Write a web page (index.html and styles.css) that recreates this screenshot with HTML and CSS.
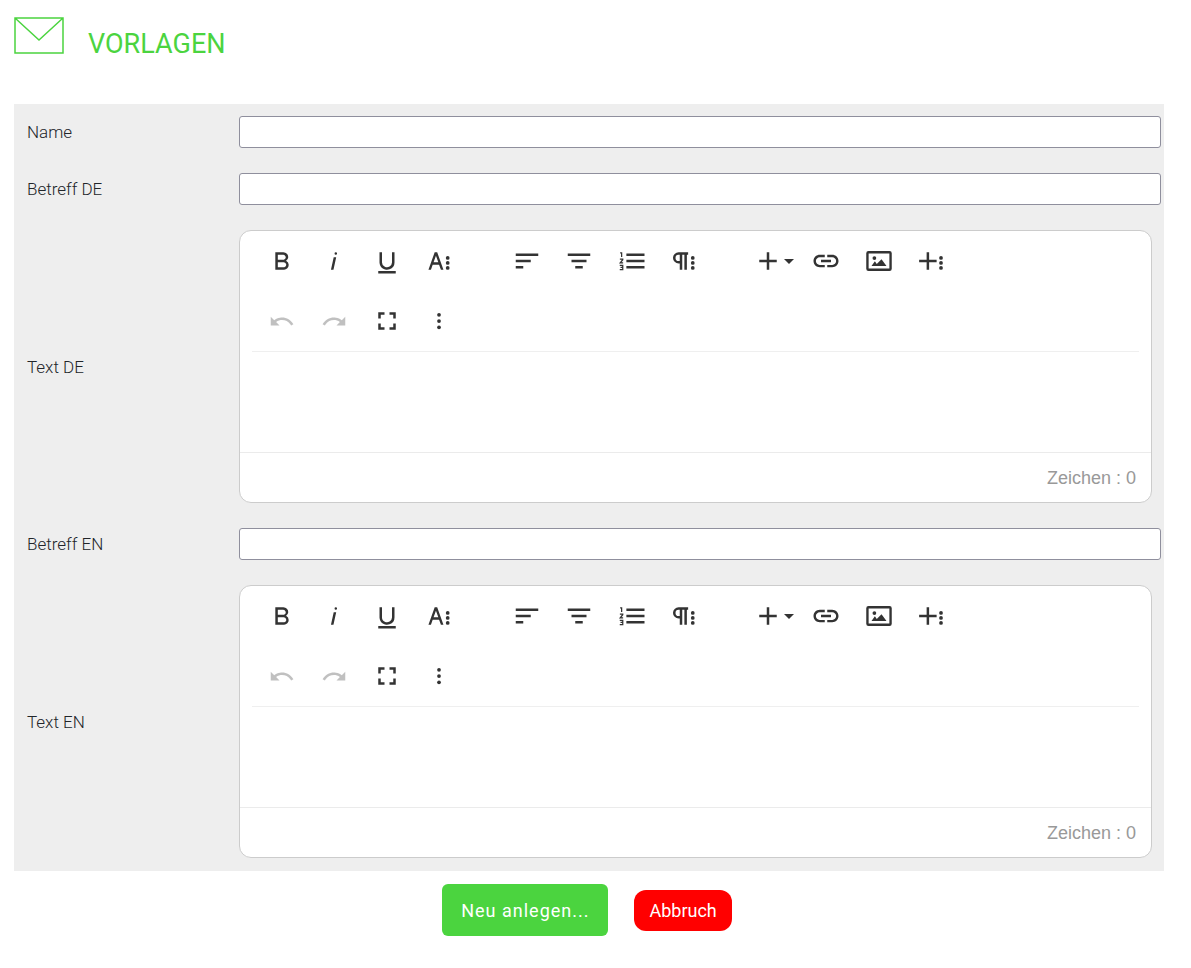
FILE: index.html
```
<!DOCTYPE html>
<html lang="de">
<head>
    <meta charset="UTF-8">
    <meta name="viewport" content="width=device-width, initial-scale=1.0">
    <title>Vorlagen</title>
    <link rel="stylesheet" href="styles.css">
</head>
<body>
    <!-- Toolbar icons, shared by both editors -->
    <svg class="icon-defs" aria-hidden="true">
        <symbol id="i-bold" viewBox="0 0 24 24"><path d="M15.25,11.8h0A3.68,3.68,0,0,0,17,9a3.93,3.93,0,0,0-3.86-4H6.65V19h7a3.74,3.74,0,0,0,3.7-3.78V15.1A3.64,3.64,0,0,0,15.25,11.8ZM8.65,7h4.2a2.09,2.09,0,0,1,2,1.3,2.09,2.09,0,0,1-1.37,2.61,2.23,2.23,0,0,1-.63.09H8.65Zm4.6,10H8.65V13h4.6a2.09,2.09,0,0,1,2,1.3,2.09,2.09,0,0,1-1.37,2.61A2.23,2.23,0,0,1,13.25,17Z"/></symbol>
        <symbol id="i-italic" viewBox="0 0 24 24"><path d="M11.76,9h2l-2.2,10h-2Zm1.68-4a1,1,0,1,0,1,1,1,1,0,0,0-1-1Z"/></symbol>
        <symbol id="i-underline" viewBox="0 0 24 24"><path d="M19,20v2H5V20Zm-3-6.785a4,4,0,0,1-5.74,3.4A3.75,3.75,0,0,1,8,13.085V5H6v8.215a6,6,0,0,0,8,5.44,5.851,5.851,0,0,0,4-5.65V5H16Z"/></symbol>
        <symbol id="i-text-more" viewBox="0 0 24 24"><path d="M13.55,19h2l-5-14h-2l-5,14h2l1.4-4h5.1Zm-5.9-6,1.9-5.2,1.9,5.2Z"/><circle cx="18.95" cy="9.5" r="1.5"/><circle cx="18.95" cy="13.5" r="1.5"/><circle cx="18.95" cy="17.5" r="1.5"/></symbol>
        <symbol id="i-left" viewBox="0 0 24 24"><path d="M3,6h18v2H3zM3,11h12v2H3zM3,16h6v2H3z"/></symbol>
        <symbol id="i-center" viewBox="0 0 24 24"><path d="M3,6h18v2H3zM6,11h12v2H6zM9,16h6v2H9z"/></symbol>
        <symbol id="i-list" viewBox="0 0 24 24"><path d="M7.5,6H22v2H7.5zM7.5,11H22v2H7.5zM7.5,16H22v2H7.5z"/><path class="thin" d="M2.5,5.5h1.2v3.3M2.3,10.5h2.3v.5l-2,2.4h2.3M2.2,15.4h2.4v3.4H2.2M2.8,17.1h1.8"/></symbol>
        <symbol id="i-paragraph" viewBox="0 0 24 24"><path d="M7.7,5H15.3v2h-1v12h-2V7h-1.7v12h-2v-5H7.7a4.5,4.5,0,0,1,0-9zM8.6,7H7.7a2.5,2.5,0,0,0,0,5H8.6z"/><circle cx="19" cy="9.5" r="1.5"/><circle cx="19" cy="13.5" r="1.5"/><circle cx="19" cy="17.5" r="1.5"/></symbol>
        <symbol id="i-plus" viewBox="0 0 24 24"><path d="M19,13h-6v6h-2v-6H5v-2h6V5h2v6h6z"/></symbol>
        <symbol id="i-link" viewBox="0 0 24 24"><path d="M3.9 12c0-1.71 1.39-3.1 3.1-3.1h4V7H7c-2.76 0-5 2.24-5 5s2.24 5 5 5h4v-1.9H7c-1.71 0-3.1-1.39-3.1-3.1zM8 13h8v-2H8v2zm9-6h-4v1.9h4c1.71 0 3.1 1.39 3.1 3.1s-1.39 3.1-3.1 3.1h-4V17h4c2.76 0 5-2.24 5-5s-2.24-5-5-5z"/></symbol>
        <symbol id="i-image" viewBox="0 0 24 24"><path d="M3.6,4h16.8A1.8,1.8,0,0,1,22.2,5.8v12.4a1.8,1.8,0,0,1-1.8,1.8H3.6a1.8,1.8,0,0,1-1.8-1.8V5.8A1.8,1.8,0,0,1,3.6,4zM3.7,6v12h16.6V6z"/><path d="M6,16l2.7-3.8,1.5,2.2L14,10.5,18,16z"/><circle cx="8.3" cy="9.6" r="1.5"/></symbol>
        <symbol id="i-plus-more" viewBox="0 0 24 24"><path d="M16.5,13h-6v6h-2v-6h-6v-2h6V5h2v6h6z"/><circle cx="20" cy="9.5" r="1.5"/><circle cx="20" cy="13.5" r="1.5"/><circle cx="20" cy="17.5" r="1.5"/></symbol>
        <symbol id="i-undo" viewBox="0 0 24 24"><path d="M10.4 9.4c-1.7.3-3.2.9-4.6 2L3 8.5v7h7l-2.7-2.7c3.7-2.6 8.8-1.8 11.5 1.9.2.3.4.5.5.8l1.8-.9C18.9 10.8 14.7 8.7 10.4 9.4z"/></symbol>
        <symbol id="i-redo" viewBox="0 0 24 24"><path d="M13.6 9.4c1.7.3 3.2.9 4.6 2L21 8.5v7h-7l2.7-2.7C13 10.2 7.9 11 5.2 14.7c-.2.3-.4.5-.5.8l-1.8-.9C5.1 10.8 9.3 8.7 13.6 9.4z"/></symbol>
        <symbol id="i-fullscreen" viewBox="0 0 24 24"><path d="M5,5h5v2H7v3H5zM14,5h5v5h-2V7h-3zM5,14h2v3h3v2H5zM17,14h2v5h-5v-2h3z"/></symbol>
        <symbol id="i-more" viewBox="0 0 24 24"><circle cx="12" cy="7" r="1.5"/><circle cx="12" cy="12" r="1.5"/><circle cx="12" cy="17" r="1.5"/></symbol>
    </svg>

    <header class="page-header">
        <svg class="envelope" viewBox="0 0 50 38" aria-hidden="true">
            <path d="M1,2h48v35h-48zM1,2L25,24L49,2"/>
        </svg>
        <h1>VORLAGEN</h1>
    </header>

    <form id="template-form">
        <div class="fields">
            <label for="name">Name</label>
            <input type="text" id="name" name="name">

            <label for="subject-de">Betreff DE</label>
            <input type="text" id="subject-de" name="subject_de">

            <label for="text-de">Text DE</label>
            <div class="editor">
                <div class="toolbar">
                    <div class="group">
                        <button type="button" aria-label="Fett"><svg><use href="#i-bold"/></svg></button>
                        <button type="button" aria-label="Kursiv"><svg><use href="#i-italic"/></svg></button>
                        <button type="button" aria-label="Unterstrichen"><svg><use href="#i-underline"/></svg></button>
                        <button type="button" aria-label="Mehr Text"><svg><use href="#i-text-more"/></svg></button>
                    </div>
                    <div class="group">
                        <button type="button" aria-label="Linksbündig"><svg><use href="#i-left"/></svg></button>
                        <button type="button" aria-label="Zentriert"><svg><use href="#i-center"/></svg></button>
                        <button type="button" aria-label="Nummerierte Liste"><svg><use href="#i-list"/></svg></button>
                        <button type="button" aria-label="Mehr Absatz"><svg><use href="#i-paragraph"/></svg></button>
                    </div>
                    <div class="group group-insert">
                        <button type="button" class="dropdown" aria-label="Einfügen"><svg><use href="#i-plus"/></svg></button>
                        <button type="button" aria-label="Link"><svg><use href="#i-link"/></svg></button>
                        <button type="button" aria-label="Bild"><svg><use href="#i-image"/></svg></button>
                        <button type="button" aria-label="Mehr einfügen"><svg><use href="#i-plus-more"/></svg></button>
                    </div>
                    <div class="group">
                        <button type="button" aria-label="Rückgängig" disabled><svg><use href="#i-undo"/></svg></button>
                        <button type="button" aria-label="Wiederholen" disabled><svg><use href="#i-redo"/></svg></button>
                        <button type="button" aria-label="Vollbild"><svg><use href="#i-fullscreen"/></svg></button>
                        <button type="button" aria-label="Mehr"><svg><use href="#i-more"/></svg></button>
                    </div>
                </div>
                <textarea id="text-de" name="text_de"></textarea>
                <div class="counter">Zeichen : 0</div>
            </div>

            <label for="subject-en">Betreff EN</label>
            <input type="text" id="subject-en" name="subject_en">

            <label for="text-en">Text EN</label>
            <div class="editor">
                <div class="toolbar">
                    <div class="group">
                        <button type="button" aria-label="Fett"><svg><use href="#i-bold"/></svg></button>
                        <button type="button" aria-label="Kursiv"><svg><use href="#i-italic"/></svg></button>
                        <button type="button" aria-label="Unterstrichen"><svg><use href="#i-underline"/></svg></button>
                        <button type="button" aria-label="Mehr Text"><svg><use href="#i-text-more"/></svg></button>
                    </div>
                    <div class="group">
                        <button type="button" aria-label="Linksbündig"><svg><use href="#i-left"/></svg></button>
                        <button type="button" aria-label="Zentriert"><svg><use href="#i-center"/></svg></button>
                        <button type="button" aria-label="Nummerierte Liste"><svg><use href="#i-list"/></svg></button>
                        <button type="button" aria-label="Mehr Absatz"><svg><use href="#i-paragraph"/></svg></button>
                    </div>
                    <div class="group group-insert">
                        <button type="button" class="dropdown" aria-label="Einfügen"><svg><use href="#i-plus"/></svg></button>
                        <button type="button" aria-label="Link"><svg><use href="#i-link"/></svg></button>
                        <button type="button" aria-label="Bild"><svg><use href="#i-image"/></svg></button>
                        <button type="button" aria-label="Mehr einfügen"><svg><use href="#i-plus-more"/></svg></button>
                    </div>
                    <div class="group">
                        <button type="button" aria-label="Rückgängig" disabled><svg><use href="#i-undo"/></svg></button>
                        <button type="button" aria-label="Wiederholen" disabled><svg><use href="#i-redo"/></svg></button>
                        <button type="button" aria-label="Vollbild"><svg><use href="#i-fullscreen"/></svg></button>
                        <button type="button" aria-label="Mehr"><svg><use href="#i-more"/></svg></button>
                    </div>
                </div>
                <textarea id="text-en" name="text_en"></textarea>
                <div class="counter">Zeichen : 0</div>
            </div>
        </div>

        <div class="actions">
            <button type="submit" class="btn-create">Neu anlegen...</button>
            <button type="button" class="btn-cancel">Abbruch</button>
        </div>
    </form>

    <script>
        // Keep the character counters up to date
        document.querySelectorAll('.editor').forEach(editor => {
            const text = editor.querySelector('textarea');
            const counter = editor.querySelector('.counter');

            text.addEventListener('input', () => {
                counter.textContent = `Zeichen : ${text.value.length}`;
            });
        });
    </script>
</body>
</html>
```
FILE: styles.css
```
* {
    box-sizing: border-box;
}

body {
    margin: 0;
    padding: 16px 27px 16px 14px;
    font-family: Roboto, sans-serif;
    background-color: #fff;
    color: #212529;
}

.icon-defs {
    display: none;
}

.page-header {
    display: flex;
    align-items: flex-start;
    gap: 24px;
    height: 88px;
}

.envelope {
    width: 50px;
    height: 38px;
    fill: none;
    stroke: #4bd43f;
    stroke-width: 1.5;
}

h1 {
    margin: 12px 0 0;
    font-size: 27px;
    line-height: 32px;
    font-weight: 400;
    color: #4bd43f;
}

.fields {
    display: grid;
    grid-template-columns: 212px 1fr;
    row-gap: 25px;
    align-items: center;
    padding: 12px 3px 13px 13px;
    background-color: #eee;
}

.fields label {
    font-size: 17px;
    line-height: 24px;
    font-weight: 300;
}

.fields input {
    width: 100%;
    height: 32px;
    padding: 2px 6px;
    font-size: 17px;
    background-color: #fff;
    border: 1px solid #8f8f9d;
    border-radius: 3px;
}

/* Editor */
.editor {
    margin-right: 9px;
    background-color: #fff;
    border: 1px solid #ccc;
    border-radius: 12px;
    overflow: hidden;
}

.toolbar {
    display: flex;
    flex-wrap: wrap;
    gap: 18px 46px;
    margin: 0 12px;
    padding: 9px;
    border-bottom: 1px solid #efefef;
}

.group {
    display: flex;
    justify-content: space-between;
    width: 199px;
}

.group-insert {
    width: 201px;
}

.group button {
    display: flex;
    align-items: center;
    justify-content: center;
    width: 42px;
    height: 42px;
    padding: 0;
    background: none;
    border: none;
    border-radius: 4px;
    cursor: pointer;
}

.group button:hover {
    background-color: #ebebeb;
}

.group svg {
    width: 30px;
    height: 30px;
    fill: #333;
}

.group button:disabled {
    opacity: 0.3;
    background: none;
    cursor: default;
}

.thin {
    fill: none;
    stroke: #333;
    stroke-width: 1;
}

.group .dropdown {
    gap: 1px;
    width: 44px;
}

.dropdown::after {
    content: "";
    border: 5px solid transparent;
    border-top-color: #333;
    border-bottom: none;
}

.editor textarea {
    display: block;
    width: 100%;
    height: 100px;
    padding: 12px 20px;
    font-size: 17px;
    border: none;
    outline: none;
    resize: none;
}

.counter {
    padding: 2px 15px 0;
    border-top: 1px solid #ebebeb;
    font-family: "Liberation Sans", Arial, sans-serif;
    font-size: 18px;
    line-height: 47px;
    text-align: right;
    color: #999;
}

/* Buttons */
.actions {
    display: flex;
    align-items: center;
    justify-content: center;
    gap: 26px;
    padding: 13px 4px 0 0;
}

.actions button {
    font-family: inherit;
    font-size: 18px;
    color: #fff;
    border: none;
    cursor: pointer;
}

.actions .btn-create {
    height: 52px;
    padding: 0 19px;
    letter-spacing: 1px;
    background-color: #4bd43f;
    border-radius: 6px;
}

.actions .btn-cancel {
    height: 41px;
    padding: 0 15px;
    background-color: #f00;
    border-radius: 12px;
}
```
